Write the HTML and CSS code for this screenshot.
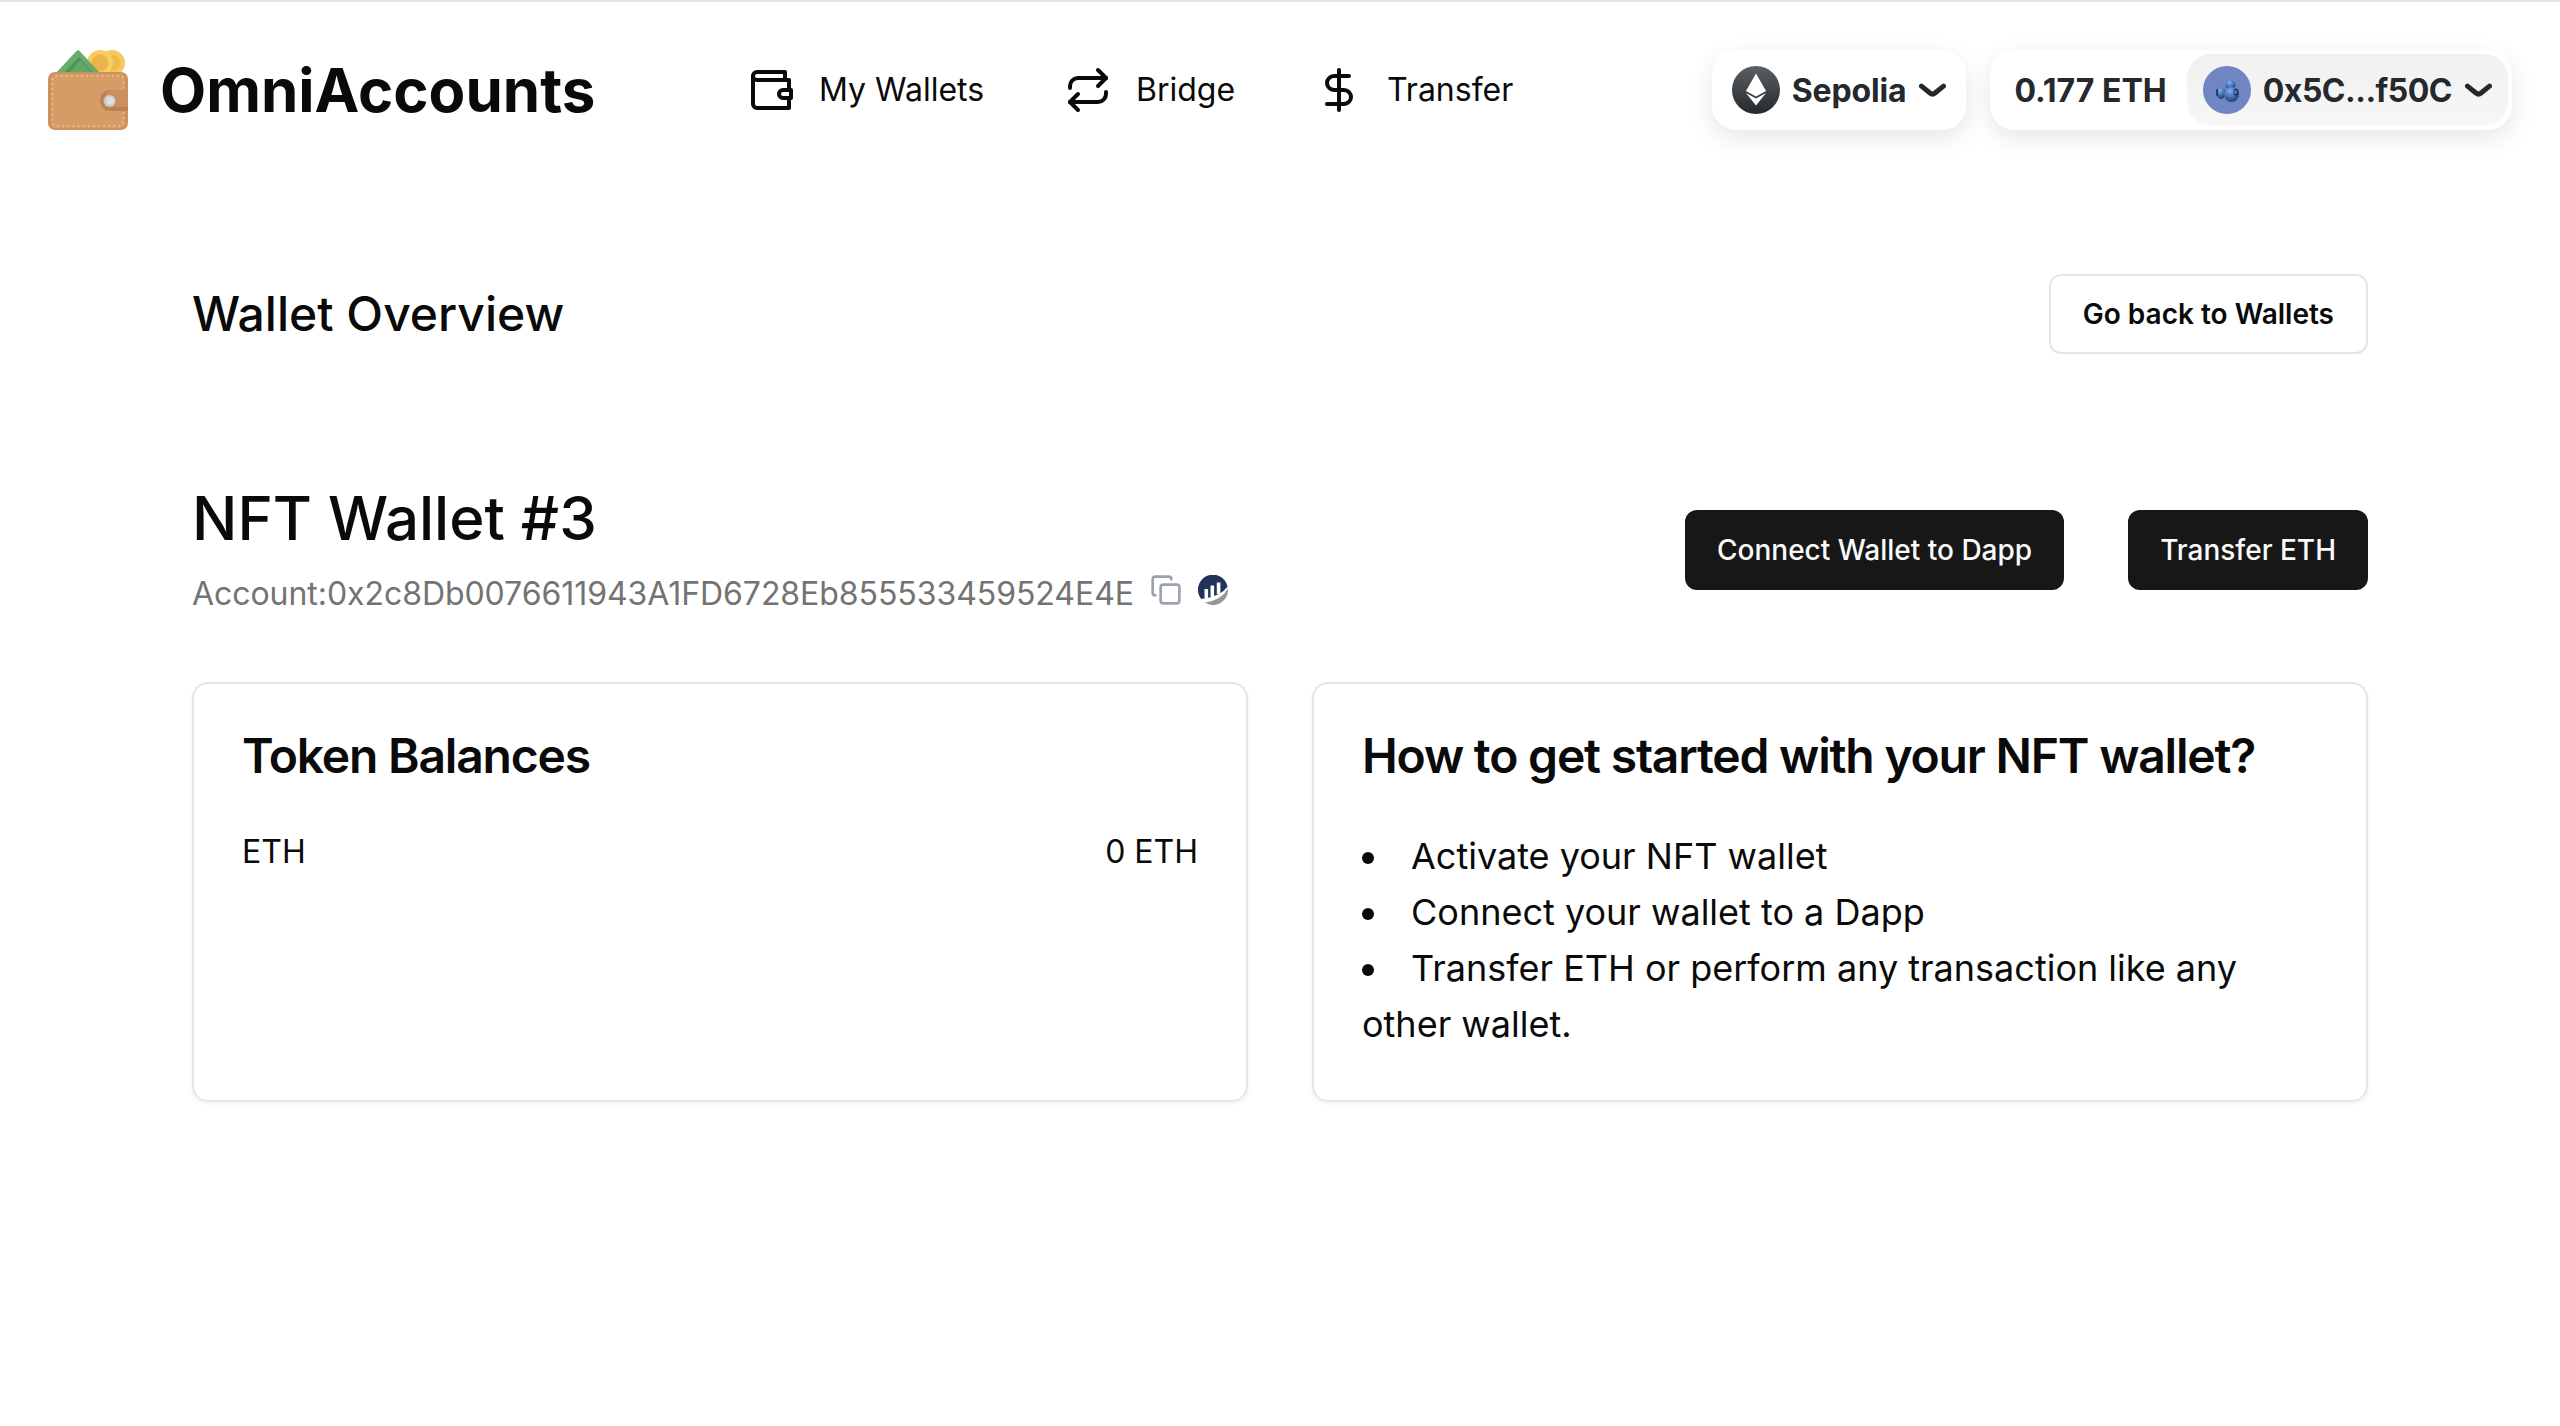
FILE: index.html
```html
<!DOCTYPE html>
<html lang="en">
<head>
<meta charset="utf-8">
<title>OmniAccounts</title>
<link rel="stylesheet" href="styles.css">
</head>
<body>
<header class="header">
  <a class="brand">
    <svg class="brand-logo" viewBox="0 0 80 80">
      <circle cx="64" cy="13" r="13" fill="#f5cb5c"/>
      <circle cx="64" cy="13" r="8.500" fill="#f0bb4c"/>
      <circle cx="52" cy="13" r="13" fill="#f7cf5f"/>
      <circle cx="52" cy="13" r="8.500" fill="#efb34b"/>
      <path d="M7 24 28 1.500q2-2.500 4 0L53 24z" fill="#68ab6b"/>
      <path d="M15 24 31 7l15 17z" fill="#4d9454"/>
      <path d="M20 24 32 10l13 14z" fill="#62a865"/>
      <rect y="22" width="80" height="58" rx="7" fill="#cb9360"/>
      <rect x="3" y="24" width="74" height="54" rx="5" fill="#d59d66"/>
      <rect x="4.500" y="26" width="71" height="50" rx="4" fill="none" stroke="#eec08c" stroke-width="2" stroke-linecap="round" stroke-dasharray=".1 5"/>
      <path d="M80 40H60a10.500 10.500 0 0 0-8 12q2 9 10 9h18z" fill="#bd8052"/>
      <path d="M80 40H63a9 9 0 0 0 0 17h17z" fill="#ca9060"/>
      <circle cx="61.500" cy="51" r="6" fill="#c9c9c9"/>
      <circle cx="62.500" cy="50.500" r="4" fill="#dedede"/>
    </svg>
    <span class="brand-name">OmniAccounts</span>
  </a>
  <nav class="nav">
    <a class="nav-item wallets">
      <svg class="icon" viewBox="0 0 24 24"><path d="M21 12V7H5a2 2 0 0 1 0-4h14v4"/><path d="M3 5v14a2 2 0 0 0 2 2h16v-5"/><path d="M18 12a2 2 0 0 0 0 4h4v-4Z"/></svg>
      <span>My Wallets</span>
    </a>
    <a class="nav-item bridge">
      <svg class="icon" viewBox="0 0 24 24"><path d="m17 2 4 4-4 4"/><path d="M3 11v-1a4 4 0 0 1 4-4h14"/><path d="m7 22-4-4 4-4"/><path d="M21 13v1a4 4 0 0 1-4 4H3"/></svg>
      <span>Bridge</span>
    </a>
    <a class="nav-item">
      <svg class="icon" viewBox="0 0 24 24"><path d="M12 2v20"/><path d="M17 5H9.500a3.500 3.500 0 0 0 0 7h5a3.500 3.500 0 0 1 0 7H6"/></svg>
      <span>Transfer</span>
    </a>
  </nav>
  <div class="connect">
    <button class="pill chain">
      <svg class="badge-icon" viewBox="0 0 48 48">
        <defs><linearGradient id="eth" x1="0" y1="0" x2="0" y2="1"><stop offset="0" stop-color="#5c5f64"/><stop offset="1" stop-color="#25292e"/></linearGradient></defs>
        <circle cx="24" cy="24" r="24" fill="url(#eth)"/>
        <path d="M24 7.500 34 25l-10 5.500L14 25z" fill="#fff"/>
        <path d="M14 27l10 5.500L34 27 24 39.500z" fill="#fff"/>
      </svg>
      <span class="chain-name">Sepolia</span>
      <svg class="chevron" viewBox="0 0 14 7"><path d="M12.750 1.540 8.516 5.004a2 2 0 0 1-2.533 0L1.750 1.540"/></svg>
    </button>
    <button class="pill account">
      <span class="balance">0.177 ETH</span>
      <span class="profile">
        <svg class="badge-icon" viewBox="0 0 48 48">
          <defs>
            <radialGradient id="ball" cx=".4" cy=".25" r=".75"><stop offset="0" stop-color="#7fb0f4"/><stop offset=".55" stop-color="#4a70b8"/><stop offset="1" stop-color="#263c70"/></radialGradient>
          </defs>
          <circle cx="24" cy="24" r="24" fill="#7086c4"/>
          <ellipse cx="18" cy="27" rx="4.500" ry="6" fill="url(#ball)"/>
          <path d="M14.500 23q-1.500 3 0 7" fill="none" stroke="#1d2a4c" stroke-width="1.400"/>
          <circle cx="27.500" cy="19" r="5" fill="url(#ball)"/>
          <circle cx="28.500" cy="28.500" r="7.500" fill="url(#ball)"/>
          <ellipse cx="33" cy="26" rx="2.500" ry="3.500" fill="#20315a"/>
          <ellipse cx="32.500" cy="26" rx="1.200" ry="2" fill="#7086c4"/>
        </svg>
        <span class="profile-name">0x5C...f50C</span>
        <svg class="chevron" viewBox="0 0 14 7"><path d="M12.750 1.540 8.516 5.004a2 2 0 0 1-2.533 0L1.750 1.540"/></svg>
      </span>
    </button>
  </div>
</header>
<main class="main">
  <div class="row">
    <h2 class="page-title">Wallet Overview</h2>
    <button class="btn outline">Go back to Wallets</button>
  </div>
  <section class="row wallet">
    <div>
      <h1 class="wallet-name">NFT Wallet #3</h1>
      <div class="address">
        <span class="hash">Account:0x2c8Db0076611943A1FD6728Eb855533459524E4E</span>
        <svg class="copy" viewBox="0 0 24 24"><rect x="8" y="8" width="14" height="14" rx="2"/><path d="M4 16c-1.100 0-2-.9-2-2V4c0-1.100.9-2 2-2h10c1.100 0 2 .9 2 2"/></svg>
        <svg class="scan" viewBox="0 0 30 30">
          <path d="M3.200 24A15 15 0 1 1 29.600 11.500Q23 21 6.500 23.500 4 23.800 3.200 24z" fill="#21325b"/>
          <path d="M29.900 13.500A15 15 0 0 1 7 27.600Q24 25 29.900 13.500z" fill="#979695"/>
          <path d="M8.300 14v9.500M14.300 10.500V22M20.600 7.500v11.500" stroke="#fff" stroke-width="3.600" fill="none"/>
        </svg>
      </div>
    </div>
    <div class="actions">
      <button class="btn dark">Connect Wallet to Dapp</button>
      <button class="btn dark">Transfer ETH</button>
    </div>
  </section>
  <section class="cards">
    <article class="card">
      <h3 class="card-title">Token Balances</h3>
      <div class="balance-row"><span>ETH</span><span>0 ETH</span></div>
    </article>
    <article class="card">
      <h3 class="card-title">How to get started with your NFT wallet?</h3>
      <ul class="steps">
        <li>Activate your NFT wallet</li>
        <li>Connect your wallet to a Dapp</li>
        <li>Transfer ETH or perform any transaction like any other wallet.</li>
      </ul>
    </article>
  </section>
</main>
</body>
</html>
```
FILE: styles.css
```css
* { box-sizing: border-box; margin: 0; padding: 0; }
body {
  font-family: Inter, "Liberation Sans", sans-serif;
  font-size: 32px;
  line-height: 48px;
  color: #0a0a0a;
  background: #fff;
  border-top: 2px solid #e2e4d8;
  min-height: 1426px;
}
button { font: inherit; color: inherit; border: 0; background: none; white-space: nowrap; }
h1, h2, h3 { font-weight: 500; }
svg { display: block; flex: none; }

.header { display: flex; align-items: center; height: 176px; padding: 0 48px; }
.brand { display: flex; align-items: center; gap: 32px; width: 699px; flex: none; }
.brand-logo { width: 80px; height: 80px; }
.brand-name { font-size: 60px; line-height: 72px; font-weight: 700; }
.nav { display: flex; align-items: center; }
.nav-item { display: flex; align-items: center; gap: 24px; white-space: nowrap; }
.wallets { width: 317px; }
.bridge { width: 251px; }
.icon { width: 48px; height: 48px; fill: none; stroke: currentColor; stroke-width: 2; stroke-linecap: round; stroke-linejoin: round; }

.connect { display: flex; gap: 24px; margin-left: auto; color: #25292e; font-weight: 700; }
.pill { display: flex; align-items: center; height: 80px; border-radius: 24px; background: #fff; box-shadow: 0 8px 24px rgba(0, 0, 0, .1); }
.chain { gap: 12px; padding: 0 20px; }
.chain-name { padding-top: 2px; letter-spacing: -.15px; }
.badge-icon { width: 48px; height: 48px; }
.chevron { width: 28px; height: 14px; fill: none; stroke: currentColor; stroke-width: 2.5; stroke-linecap: round; stroke-linejoin: round; }
.account { padding-right: 4px; }
.balance { padding: 2px 20px 0 24px; }
.profile { display: flex; align-items: center; gap: 12px; height: 72px; padding: 0 16px; border-radius: 24px; background: linear-gradient(0deg, rgba(0, 0, 0, .03), rgba(0, 0, 0, .06)); }
.profile-name { padding-top: 2px; letter-spacing: -.5px; }

.main { padding: 96px 192px 0; }
.row { display: flex; align-items: center; justify-content: space-between; }
.page-title { font-size: 48px; line-height: 64px; }
.btn { height: 80px; padding: 0 32px; border-radius: 12px; font-size: 28px; line-height: 40px; font-weight: 500; }
.outline { border: 2px solid #e5e5e5; font-weight: 600; }
.dark { background: #171717; color: #fafafa; }
.wallet { margin-top: 128px; height: 136px; }
.wallet-name { font-size: 60px; line-height: 72px; }
.address { display: flex; align-items: center; margin-top: 16px; color: #737373; }
.hash { letter-spacing: -.055px; }
.copy { width: 32px; height: 32px; margin: -8px 16px 0; fill: none; stroke: #9ca3af; stroke-width: 2; stroke-linecap: round; stroke-linejoin: round; }
.scan { width: 30px; height: 30px; margin-top: -8px; }
.actions { display: flex; gap: 64px; }

.cards { display: grid; grid-template-columns: 1fr 1fr; gap: 64px; margin-top: 64px; }
.card { padding: 48px; border: 2px solid #e5e5e5; border-radius: 16px; box-shadow: 0 2px 4px rgba(0, 0, 0, .05); }
.card-title { font-size: 48px; line-height: 48px; font-weight: 600; letter-spacing: -1.2px; white-space: nowrap; }
.balance-row { display: flex; justify-content: space-between; margin-top: 48px; }
.steps { margin-top: 48px; font-size: 36px; line-height: 56px; list-style: disc inside; }
```
